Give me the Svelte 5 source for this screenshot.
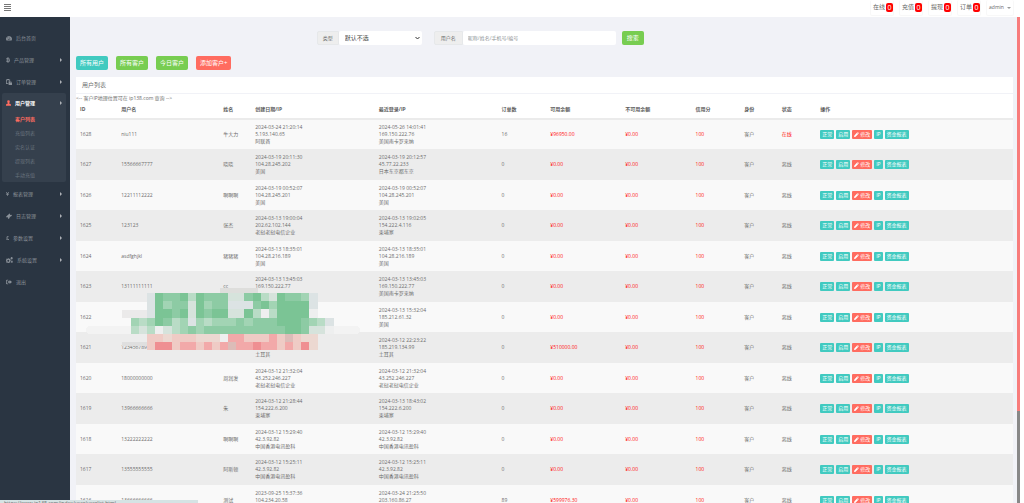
<script>
  const icons = {
    dash: { w: 6, vb: '0 0 18 16', d: 'M9 2a9 9 0 0 0-7.6 13.6h15.2A9 9 0 0 0 9 2zM3.5 12a1.2 1.2 0 1 1 0-2.4 1.2 1.2 0 0 1 0 2.4zm1.9-4.2a1.2 1.2 0 1 1 0-2.4 1.2 1.2 0 0 1 0 2.4zM9 3.5a1.2 1.2 0 1 1 0 2.4 1.2 1.2 0 0 1 0-2.4zM9 14a2 2 0 0 1-.6-3.9L10 6.3l1 .3-1.2 3.8A2 2 0 0 1 9 14zm5.5-2a1.2 1.2 0 1 1 0-2.4 1.2 1.2 0 0 1 0 2.4z' },
    btc: { w: 4, vb: '0 0 12 16', d: 'M1 2.2h2.8V0h1.6v2.2h1.2V0h1.6v2.4c2.2.4 3.2 1.5 3.1 3 0 1.2-.6 1.900-1.600 2.300 1.400.4 2.200 1.300 2.100 2.800-.1 2-1.400 3-3.600 3.200V16H6.600v-2.200H5.400V16H3.800v-2.200H1V12h1.200V4H1zM5 4.200v2.700h1.600c1 0 1.700-.5 1.700-1.400S7.600 4.200 6.600 4.200zm0 4.400v3.200h1.900c1.200 0 1.900-.6 1.900-1.600S8.100 8.600 6.900 8.600z' },
    paste: { w: 6, vb: '0 0 16 16', d: 'M0 1h3V0h5v1h3v4H9V3H2v8h4v2H0zM7 6h5v4h4v6H7zM13 6l3 3h-3z' },
    user: { w: 5, vb: '0 0 14 16', d: 'M7 0a3.6 3.6 0 0 1 3.6 3.8c0 1.8-.7 3.4-1.8 4.2v1.2C12 10 14 11.2 14 14v1.5H0V14c0-2.8 2-4 5.2-4.800V8C4.100 7.200 3.400 5.600 3.400 3.800A3.600 3.600 0 0 1 7 0z' },
    yen: { w: 3, vb: '0 0 10 16', d: 'M0 1h2.4L5 6.5 7.6 1H10L6.9 7.3h2.3v1.5H6.1v1.2h3.1v1.5H6.1V15H3.900v-3.500H.8V10h3.100V8.800H.8V7.300h2.300z' },
    puzzle: { w: 6, vb: '0 0 16 16', d: 'M5 5.5 9.5 1l1.8 1.8-1 1.7 2 1 2-.8L16 6.5 12.5 10l-1.8-.4-1.2 1.2.7 2L7 16l-2-2 .6-1.7-1.2-1.1L2 12 0 10l3.5-3.2z' },
    gbp: { w: 3, vb: '0 0 10 16', d: 'M1 7h1.3V4.8C2.3 2.5 3.8 1 6.1 1c1.5 0 2.6.5 3.4 1.3L8.200 3.900c-.6-.5-1.200-.8-1.900-.8-1.100 0-1.700.7-1.700 1.900v2h3v1.800h-3V13h3.200v-2H10v4H1v-2h1.300V8.800H1z' },
    cogs: { w: 7, vb: '0 0 19 16', d: 'M5 3h2.4l.4 1.7 1 .4 1.5-.9L12 5.9l-.9 1.5.4 1L13 8.8v2.4l-1.6.4-.4 1 .9 1.5-1.7 1.7-1.5-.9-1 .4L7.400 16H5l-.4-.8-1-.4-1.500.9L.4 14l.9-1.500-.4-1L0 11.200V8.800l1-.4.3-1L.4 5.900l1.700-1.700 1.500.9 1-.4zM6.200 7.500a2.500 2.500 0 1 0 0 5 2.500 2.500 0 0 0 0-5zM14.500 0h2l.4 1.400 1.600.3v2l-1.400.8.2 1.500-1.400.7-1.200-1-1.500.8-1-1.200.6-1.300-.6-1.500 1.400-1zM15.500 9.500l2 .5 1 1.500-.8 1.200.6 1.500-1.400 1.300-1.400-.7-1.600.5-.6-1.800 1-1.200-.3-1.700z' },
    out: { w: 6, vb: '0 0 16 16', d: 'M6 2v2H3.2C2.5 4 2 4.5 2 5.2v5.6c0 .7.5 1.2 1.2 1.2H6v2H3a3 3 0 0 1-3-3V5a3 3 0 0 1 3-3zM9.5 2.5 16 8l-6.5 5.5V10H5V6h4.5z' },
  };
  const before = [['dash', '后台首页', false], ['btc', '产品管理', true], ['paste', '订单管理', true]];
  const after = [['yen', '报表管理', true], ['puzzle', '日志管理', true], ['gbp', '参数设置', true], ['cogs', '系统设置', true], ['out', '退出', false]];
  const sub = ['客户列表', '充值列表', '实名认证', '提现列表', '手动充值'];
  const alerts = ['在线', '充值', '提现', '订单'];
  const heads = ['ID', '用户名', '姓名', '创建日期/IP', '最近登录/IP', '订单数', '可用余额', '不可用余额', '信用分', '身份', '状态', '操作'];
  const r = (id, user, name, made, seen, orders = '0', money = '0.00', state = '离线') => ({ id, user, name, made, seen, orders, money, state });
  const rows = [
    r(1628, 'niu111', '牛大力', ['2024-03-24 21:20:14', '5.193.140.65', '阿联酋'], ['2024-05-26 14:01:41', '169.150.222.76', '美国南卡罗来纳'], '16', '96950.00', '在线'),
    r(1627, '15566667777', '晓晓', ['2024-03-19 20:11:30', '104.28.245.202', '美国'], ['2024-03-19 20:12:57', '45.77.22.233', '日本东京都东京']),
    r(1626, '12211112222', '啊啊啊', ['2024-03-19 00:52:07', '104.28.245.201', '美国'], ['2024-03-19 00:52:07', '104.28.245.201', '美国']),
    r(1625, '123123', '张杰', ['2024-03-13 19:00:04', '202.62.102.144', '老挝老挝电信企业'], ['2024-03-13 19:02:05', '154.222.4.116', '柬埔寨']),
    r(1624, 'asdfghjkl', '猪猪猪', ['2024-03-13 18:35:01', '104.28.216.189', '美国'], ['2024-03-13 18:35:01', '104.28.216.189', '美国']),
    r(1623, '13111111111', 'cc', ['2024-03-13 13:45:03', '169.150.222.77', ''], ['2024-03-13 13:45:03', '169.150.222.77', '美国南卡罗来纳']),
    r(1622, '', '', ['', '', ''], ['2024-03-13 15:32:04', '185.212.61.32', '美国']),
    r(1621, '12345678911', '', ['', '', '土耳其'], ['2024-03-12 22:23:22', '185.219.134.99', '土耳其'], '0', '510000.00'),
    r(1620, '18000000000', '周润发', ['2024-03-12 21:32:04', '43.252.246.227', '老挝老挝电信企业'], ['2024-03-12 21:32:04', '43.252.246.227', '老挝老挝电信企业']),
    r(1619, '13966666666', '朱', ['2024-03-12 21:28:44', '154.222.6.200', '柬埔寨'], ['2024-03-13 18:43:02', '154.222.6.200', '柬埔寨']),
    r(1618, '13222222222', '啊啊啊', ['2024-03-12 15:29:40', '42.3.92.82', '中国香港电讯盈科'], ['2024-03-12 15:29:40', '42.3.92.82', '中国香港电讯盈科']),
    r(1617, '13555555555', '阿斯顿', ['2024-03-12 15:25:11', '42.3.92.82', '中国香港电讯盈科'], ['2024-03-12 15:25:11', '42.3.92.82', '中国香港电讯盈科']),
    r(1616, '13666666666', '测试', ['2023-09-25 15:37:36', '104.234.20.58', '美国'], ['2024-03-24 21:25:50', '203.160.86.27', '柬埔寨'], '89', '599976.30'),
  ];
  const tones = { A: '#7bc495', B: '#8dcba4', C: '#a2d4b4', D: '#b9dcc6', E: '#d6e3dc', F: '#dce3e4', w: '#eeefef', g: '#dcdcdb', p: '#efcbc5', s: '#ecd8d1', q: '#f2a9a9', r: '#ef8f92', k: '#dcbcb8' };
  const mosaic = [
    '..FABBADABBBEEBADEABBCF..',
    '..FACBBEACBBFFFBACAAAAF..',
    '..FAABAEABAAEEADwDAAAAw..',
    'CDCABDCFCDCCCBCBBBAAABCDF',
    'DEDwEDCBCBBBBBBBBBBAABEEw',
    '..ppspppssswqqpppqpkpss..',
    '..prrpqqpqpqkqqrqqpqprs..',
  ];
</script>

{#snippet icon(name)}
  <svg class="icon" viewBox={icons[name].vb} style:width="{icons[name].w}px" aria-hidden="true"><path d={icons[name].d} fill-rule="evenodd" /></svg>
{/snippet}

{#snippet item(entry)}
  <li><a class="item" href="#menu">{@render icon(entry[0])}<span>{entry[1]}</span>{#if entry[2]}<i class="arrow"></i>{/if}</a></li>
{/snippet}

<div class="page">
  <header>
    <button class="burger" aria-label="菜单"><i></i><i></i><i></i><i></i></button>
    <nav class="alerts">
      {#each alerts as label}
        <a class="alert" href="#alerts">{label}<b>0</b></a>
      {/each}
      <button class="account">admin <i class="caret"></i></button>
    </nav>
  </header>
  <div class="body">
    <aside>
      <ul>
        {#each before as entry}{@render item(entry)}{/each}
        <li class="open">
          <a class="item" href="#menu">{@render icon('user')}<span>用户管理</span><i class="arrow"></i></a>
          <ul>
            {#each sub as label, i}<li><a class="sub" class:current={i === 0} href="#sub">{label}</a></li>{/each}
          </ul>
        </li>
        {#each after as entry}{@render item(entry)}{/each}
      </ul>
    </aside>
    <main>
      <form class="filter">
        <div class="group">
          <label for="kind">类型</label>
          <div class="pick">
            <select id="kind"><option>默认不选</option></select>
            <svg viewBox="0 0 10 6" aria-hidden="true"><path d="M1 1l4 4 4-4" /></svg>
          </div>
        </div>
        <div class="group wide">
          <label for="name">用户名</label>
          <input id="name" type="text" placeholder="昵称/姓名/手机号/编号" />
        </div>
        <button type="button" class="btn green">搜索</button>
      </form>
      <div class="actions">
        <button class="btn teal">所有用户</button>
        <button class="btn green">所有客户</button>
        <button class="btn green">今日客户</button>
        <button class="btn red">添加客户+</button>
      </div>
      <section class="panel">
        <h1>用户列表</h1>
        <p>&lt;-- 客户IP地理位置可在 ip138.com 查询 --&gt;</p>
        <table>
          <thead><tr>{#each heads as head}<th>{head}</th>{/each}</tr></thead>
          <tbody>
            {#each rows as row}
              <tr>
                <td>{row.id}</td>
                <td>{row.user}</td>
                <td>{row.name}</td>
                <td>{#each row.made as line}<div class="line">{line}</div>{/each}</td>
                <td>{#each row.seen as line}<div class="line">{line}</div>{/each}</td>
                <td>{row.orders}</td>
                <td class="hot">¥{row.money}</td>
                <td class="hot">¥0.00</td>
                <td class="hot">100</td>
                <td>客户</td>
                <td class:hot={row.state === '在线'}>{row.state}</td>
                <td>
                  <div class="ops">
                    <button class="teal">正常</button>
                    <button class="teal">启用</button>
                    <button class="red"><svg viewBox="0 0 12 12" aria-hidden="true"><path d="M0 12l.8-3.8L7 2l3 3-6.2 6.2zM7.8 1.2 9 0l3 3-1.2 1.2z" /></svg>修改</button>
                    <button class="teal">IP</button>
                    <button class="teal">资金报表</button>
                  </div>
                </td>
              </tr>
            {/each}
          </tbody>
        </table>
        <svg class="mosaic" viewBox="0 0 276 64" aria-hidden="true">
          <rect x="0" y="40" width="274" height="8" rx="4" fill="#f3f3f3" />
          <rect x="36" y="24" width="26" height="8" fill="#ebeaea" />
          <rect x="134" y="2" width="38" height="6" fill="#dededc" />
          <rect x="36" y="56" width="28" height="4" fill="#dfdfdf" />
          {#each mosaic as line, y}
            {#each line as tone, x}
              {#if tone !== '.'}<rect x={45 + Math.round(x * 8.1)} y={7 + y * 8 + (y > 2 ? 1 : 0)} width="9" height={y === 2 ? 9 : 8} fill={tones[tone]} />{/if}
            {/each}
          {/each}
        </svg>
      </section>
    </main>
    <div class="rail"><i></i></div>
  </div>
  <div class="status">https://www.ip138.com/index/user/userlist.html</div>
</div>

<style>
  :global(body) { margin: 0; overflow: hidden; background: #fff; }
  .page { height: 100vh; display: flex; flex-direction: column; overflow: hidden; position: relative; font: 5px/7px "Open Sans", "Noto Sans CJK SC", sans-serif; color: #6c6c6c; }
  .page :global(*) { box-sizing: border-box; }
  ul { list-style: none; margin: 0; padding: 0; }
  a { color: inherit; text-decoration: none; }
  button { font: inherit; border: 0; padding: 0; margin: 0; background: none; color: inherit; cursor: pointer; white-space: nowrap; }
  header { flex: none; height: 17px; display: flex; justify-content: space-between; align-items: flex-start; padding: 0 10px 0 4px; background: #fff; }
  .burger { display: flex; flex-direction: column; gap: 1px; width: 7px; margin-top: 4px; }
  .burger i { height: 1px; background: #777; }
  .alerts { display: flex; gap: 5px; }
  .alert, .account { height: 16px; display: flex; align-items: center; border: 1px solid #f8f8f8; border-top: 0; border-radius: 2px; padding: 0 0 0 2px; font-size: 6px; gap: 1px; color: #666; }
  .alert { width: 24px; }
  .alert b { width: 7px; height: 9px; border-radius: 2px; background: #f00; color: #fff; font-size: 7px; font-weight: 400; line-height: 9px; text-align: center; }
  .account { padding: 0 2px; gap: 3px; width: 28px; font-size: 5px; justify-content: center; }
  .caret { border: 2px solid transparent; border-top-color: #999; border-bottom: 0; }
  .body { flex: 1; min-height: 0; display: flex; padding-right: 4px; }
  aside { flex: none; width: 70px; background: #2a3542; padding: 10px 4px 0 2px; color: #8a9199; }
  .item { display: flex; align-items: center; gap: 4px; height: 22px; padding: 0 4px; }
  .icon { height: 6px; fill: currentColor; flex: none; }
  .arrow { margin-left: auto; border: 2px solid transparent; border-left-color: #aeb2b7; border-right: 0; }
  .open { background: #35404d; border-radius: 2px; margin-bottom: 1px; }
  .open .item { height: 19px; padding-top: 1px; color: #fff; font-weight: 700; }
  .open .icon { fill: #ff6c60; }
  .sub { display: block; height: 14px; line-height: 14px; padding-left: 13px; color: #69737e; }
  .sub.current { color: #ff6c60; font-weight: 700; }
  main { flex: 1; min-width: 0; background: #f1f2f7; padding: 14px 4px 0 6px; overflow: hidden; }
  .filter { display: flex; align-items: center; gap: 6px; margin: 0 0 11px; padding-left: 25.7%; }
  .group { display: flex; height: 14px; width: 105px; margin-right: 6px; font-size: 6px; }
  .group.wide { width: 182px; margin-right: 0; }
  label { flex: none; display: flex; align-items: center; padding: 0 5px; background: #eee; border: 1px solid #e6e8ea; border-radius: 2px 0 0 2px; font-size: 5px; }
  .group.wide label { padding: 0 6px; }
  .pick { flex: 1; position: relative; display: flex; }
  .pick svg { position: absolute; right: 2px; top: 5px; width: 5px; height: 4px; fill: none; stroke: #333; stroke-width: 2; }
  select, input { appearance: none; flex: 1; min-width: 0; border: 0; border-radius: 2px; background: #fff; padding: 0 6px; font: inherit; color: #444; outline: 0; }
  input { padding: 0 5px; font-size: 5px; }
  input::placeholder { color: #8c9194; }
  .btn { height: 14px; padding: 0 4px; border-radius: 2px; color: #fff; font-size: 6px; }
  .filter .btn { padding: 0 5px; }
  .teal { background: #41cac0; }
  .green { background: #78cd51; }
  .red { background: #ff6c60; }
  .actions { display: flex; gap: 8px; margin-bottom: 7px; }
  .panel { position: relative; background: #fff; }
  h1 { margin: 0; height: 17px; padding: 0 6px; border-bottom: 1px solid #f1f2f7; font-size: 6px; line-height: 17px; font-weight: 400; }
  p { margin: 0; line-height: 8px; }
  table { width: 100%; border-collapse: collapse; table-layout: fixed; }
  th, td { text-align: left; padding: 0 4px; white-space: nowrap; vertical-align: middle; }
  th { height: 17px; padding-bottom: 1px; border-bottom: 2px solid #ebebeb; color: #5c5c5c; }
  th:nth-child(1) { width: 4.4%; }
  th:nth-child(2) { width: 10.9%; }
  th:nth-child(3) { width: 3.4%; }
  th:nth-child(4) { width: 13.2%; }
  th:nth-child(5) { width: 13.1%; }
  th:nth-child(6) { width: 5.2%; }
  th:nth-child(7) { width: 8%; }
  th:nth-child(8) { width: 7.5%; }
  th:nth-child(9) { width: 5.2%; }
  th:nth-child(10) { width: 4%; }
  th:nth-child(11) { width: 4.1%; }
  tbody tr { height: 30px; background: #f9f9f9; }
  tbody tr:nth-child(even) { height: 31px; background: #ececec; }
  .line { height: 7px; }
  .hot { color: #f11; }
  .ops { display: flex; gap: 2px; }
  .ops button { height: 9px; padding: 0 2px; border-radius: 1px; color: #fff; display: flex; align-items: center; gap: 1px; }
  .ops svg { width: 5px; height: 5px; fill: #fff; }
  .mosaic { position: absolute; left: 10px; top: 209px; width: 276px; height: 64px; shape-rendering: crispEdges; }
  .rail { flex: none; width: 3px; background: #888; }
  .rail i { display: block; height: 81%; background: #f87c7c; }
  .status { position: absolute; left: 0; bottom: 0; width: 198px; height: 3px; padding-left: 4px; overflow: hidden; background: #d5e3e4; }
</style>
